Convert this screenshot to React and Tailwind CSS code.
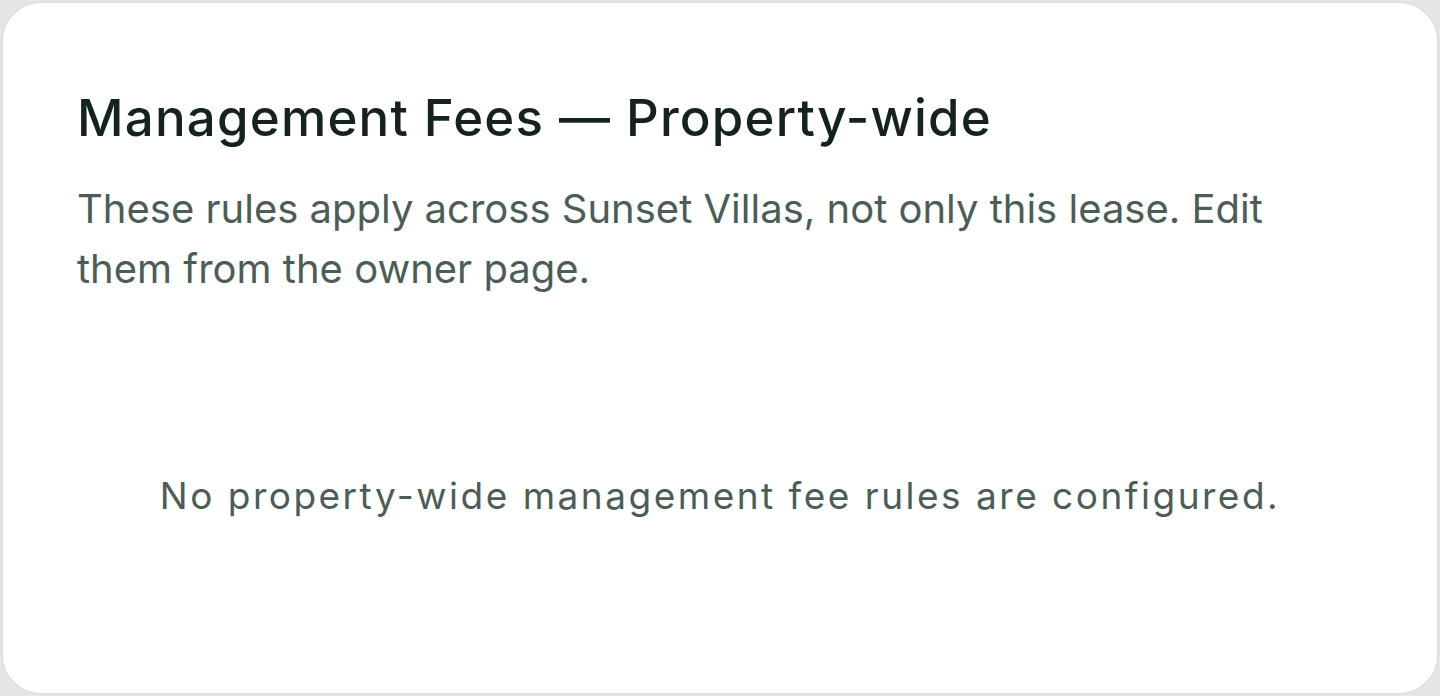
export default function App() {
  return (
    <div className="h-[696px] w-[1440px] bg-[#e4e7e5] p-[1px]" style={{ fontFamily: "Inter, 'Noto Sans', sans-serif" }}>
      <div className="flex h-full flex-col rounded-[40px] border-2 border-[#dde2df] bg-white px-[74px] pt-[81px]">
        <h1 className="text-[51px] font-medium leading-[68px] tracking-[1.2px] text-[#14231c]">
          Management Fees — Property-wide
        </h1>
        <p className="mt-[27px] max-w-[1220px] text-[40px] leading-[60px] tracking-[0px] text-[#4b5d56]">
          These rules apply across Sunset Villas, not only this lease. Edit them from the owner page.
        </p>
        <div className="flex flex-1 items-start justify-center pt-[173px]">
          <p className="text-[37px] leading-[48px] tracking-[2.5px] text-[#4b5d56]">
            No property-wide management fee rules are configured.
          </p>
        </div>
      </div>
    </div>
  );
}
